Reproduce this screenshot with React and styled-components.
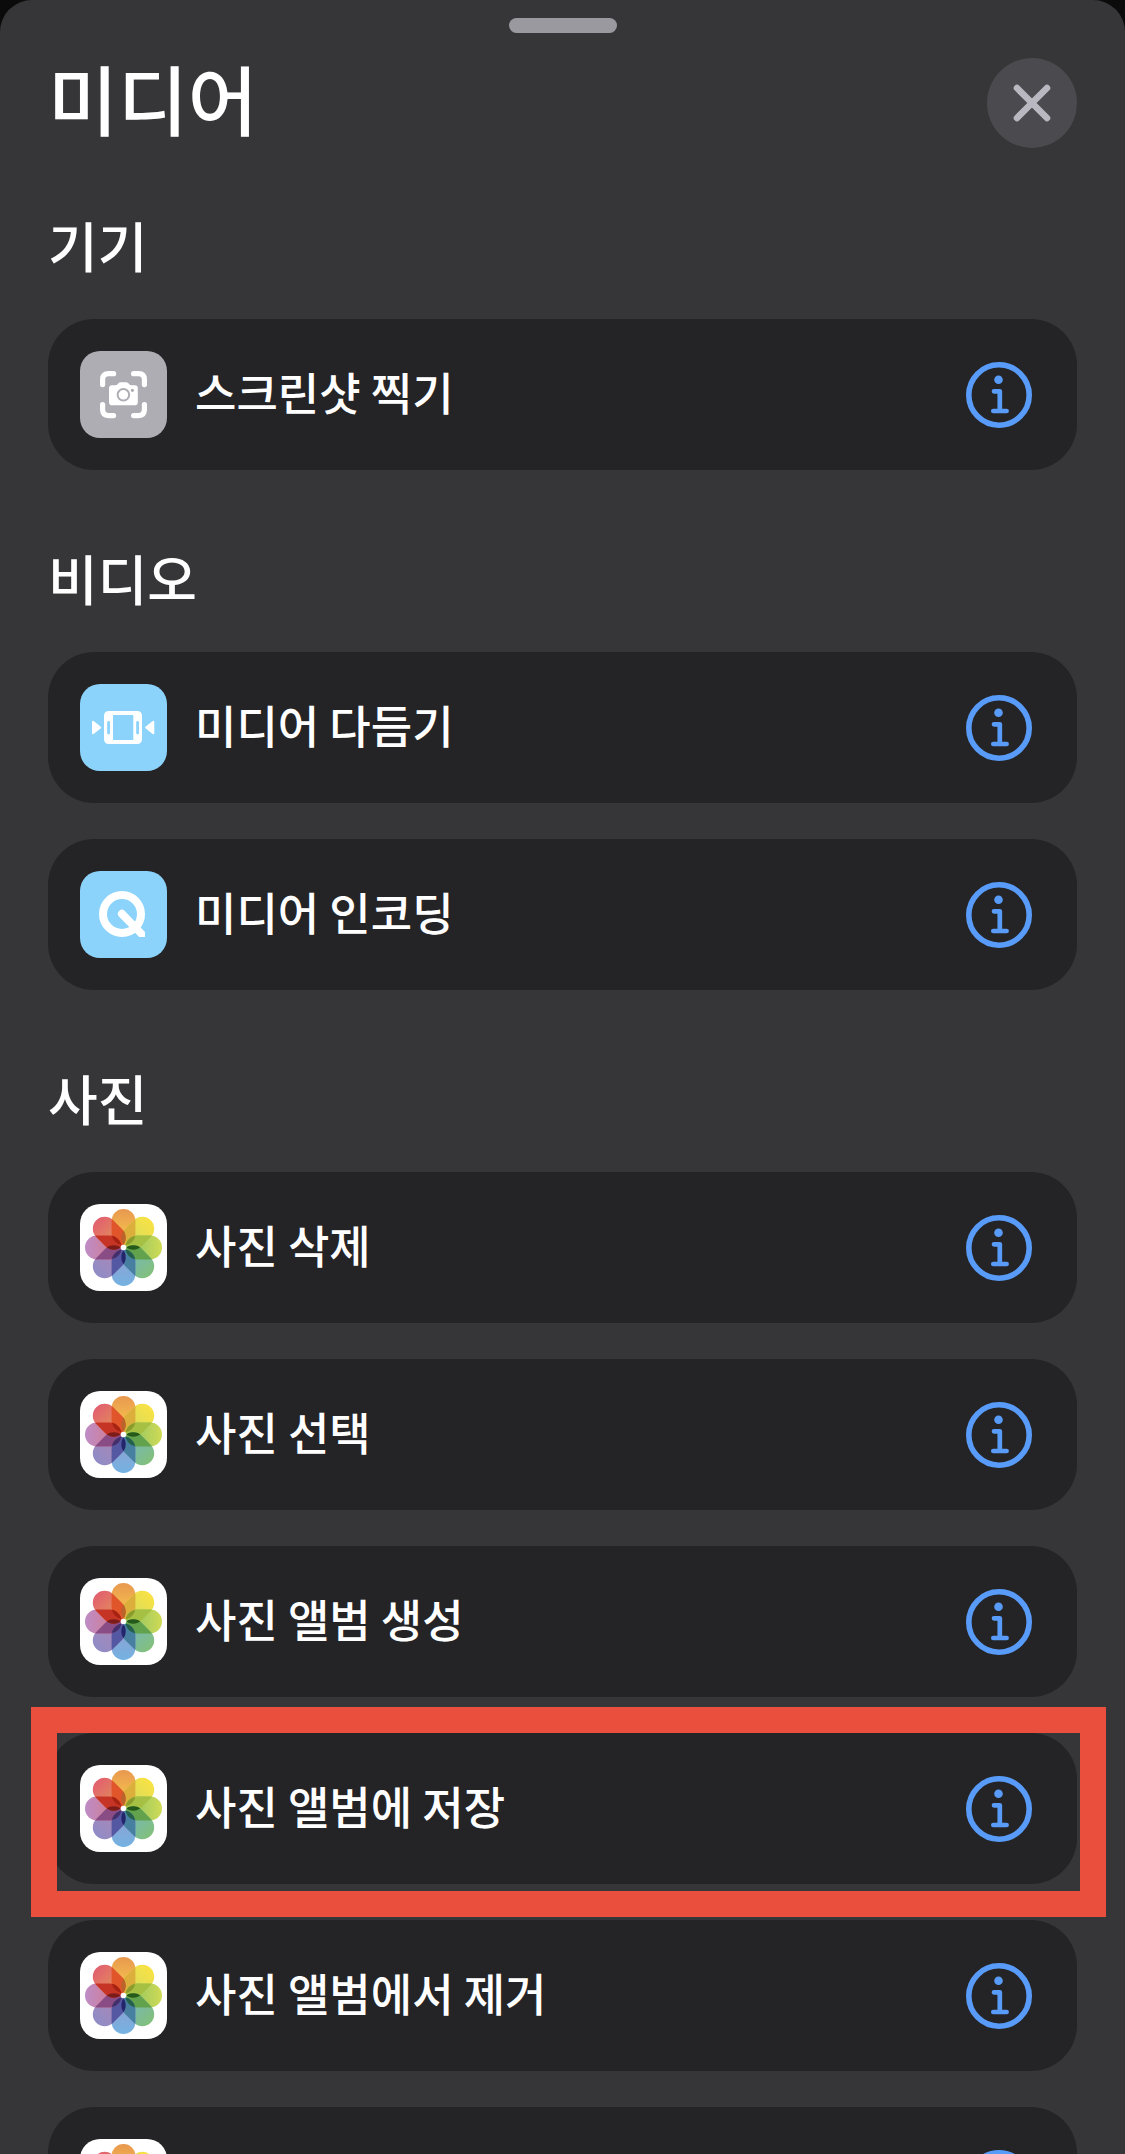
import React, { useId } from "react";
import styled, { createGlobalStyle } from "styled-components";

const GlobalStyle = createGlobalStyle`
  * {
    box-sizing: border-box;
  }
  body {
    margin: 0;
    background: #0b0b0c;
    color: white;
    font-family: "Noto Sans CJK KR", sans-serif;
  }
  button {
    padding: 0;
    border: none;
    background: none;
    color: inherit;
    font: inherit;
    cursor: pointer;
  }
`;

const Sheet = styled.main`
  display: flex;
  flex-direction: column;
  height: 100vh;
  overflow: hidden;
  padding: 18px 48px 0;
  border-radius: 32px 32px 0 0;
  background: #363638;
`;

const Grabber = styled.div`
  flex: none;
  align-self: center;
  width: 108px;
  height: 15px;
  border-radius: 8px;
  background: #9a99a0;
`;

const Header = styled.header`
  display: flex;
  align-items: flex-start;
  justify-content: space-between;
  margin: 25px 0 59px;
`;

const Title = styled.h1`
  margin: 0;
  font-size: 76px;
  line-height: 78px;
  font-weight: 500;
`;

const CloseButton = styled.button`
  display: flex;
  align-items: center;
  justify-content: center;
  width: 90px;
  height: 90px;
  border-radius: 50%;
  background: #4b4a4e;
`;

const Section = styled.section`
  & + & {
    margin-top: 70px;
  }
`;

const SectionTitle = styled.h2`
  margin: 0 0 36px;
  font-size: 54px;
  line-height: 76px;
  font-weight: 500;
`;

const List = styled.ul`
  display: flex;
  flex-direction: column;
  gap: 36px;
  margin: 0;
  padding: 0;
  list-style: none;
`;

const Row = styled.li`
  position: relative;
  display: flex;
  align-items: center;
  height: 151px;
  padding: 0 45px 0 32px;
  border-radius: 46px;
  background: #242426;
`;

const Action = styled.button`
  flex: 1;
  display: flex;
  align-items: center;
  gap: 28px;
  text-align: left;
`;

const Tile = styled.span`
  flex: none;
  width: 87px;
  height: 87px;
  border-radius: 20px;
  overflow: hidden;
  background: ${(props) => props.$color};

  svg {
    display: block;
  }
`;

const Label = styled.span`
  padding-bottom: 6px;
  font-size: 45px;
  line-height: 64px;
  font-weight: 500;
`;

const InfoButton = styled.button`
  flex: none;
  width: 66px;
  height: 66px;

  svg {
    display: block;
  }
`;

/* frame drawn over the highlighted row */
const Marker = styled.span`
  position: absolute;
  top: -26px;
  right: -29px;
  bottom: -33px;
  left: -17px;
  z-index: 1;
  border: 26px solid #ea4e3d;
  pointer-events: none;
`;

const CloseIcon = () => (
  <svg width="38" height="38" viewBox="0 0 38 38" fill="none" stroke="#b9b8c0" strokeWidth="6.6" strokeLinecap="round">
    <path d="M4 4L34 34M34 4L4 34" />
  </svg>
);

const InfoIcon = () => (
  <svg width="66" height="66" viewBox="0 0 66 66" fill="none" stroke="#589bf8">
    <circle cx="33" cy="33" r="30.2" strokeWidth="5.6" />
    <circle cx="32.5" cy="17.8" r="4.3" fill="#589bf8" stroke="none" />
    <path d="M28 29.3H33.8V49M27.3 49H40.6" strokeWidth="4.7" strokeLinecap="round" strokeLinejoin="round" />
  </svg>
);

const ScreenshotIcon = () => (
  <svg width="87" height="87" viewBox="0 0 87 87">
    <path
      d="M22.6 33.6V28.6Q22.6 22.7 28.6 22.7H33.6M53.6 22.7H58.6Q64.4 22.7 64.4 28.6V33.6M64.4 53.6V58.6Q64.4 64.6 58.6 64.6H53.6M33.6 64.6H28.6Q22.6 64.6 22.6 58.6V53.6"
      fill="none"
      stroke="white"
      strokeWidth="5.2"
      strokeLinecap="round"
    />
    <path
      d="M32 34.3H35.2Q36.8 34.3 37.8 33L38.4 32.3Q39.3 31.3 40.8 31.3H46Q47.5 31.3 48.4 32.3L49 33Q50 34.3 51.6 34.3H54.7Q57.8 34.3 57.8 37.4V51.2Q57.8 54.3 54.7 54.3H32Q29 54.3 29 51.2V37.4Q29 34.3 32 34.3Z"
      fill="white"
    />
    <circle cx="43.4" cy="43.8" r="5.8" fill="white" stroke="#aeadb3" strokeWidth="2" />
    <circle cx="52.4" cy="39.3" r="1.6" fill="#aeadb3" />
  </svg>
);

const TrimIcon = () => (
  <svg width="87" height="87" viewBox="0 0 87 87" fill="white">
    <path
      fillRule="evenodd"
      d="M29 27H57Q62 27 62 32V55Q62 60 57 60H29Q24 60 24 55V32Q24 27 29 27ZM33 31V56H53.3V31ZM28.6 37Q27.2 37 27.2 38.4V49Q27.2 50.4 28.6 50.4Q30 50.4 30 49V38.4Q30 37 28.6 37ZM57.6 37Q56.2 37 56.2 38.4V49Q56.2 50.4 57.6 50.4Q59 50.4 59 49V38.4Q59 37 57.6 37Z"
    />
    <path
      d="M13 37.8V49.2L20.2 43.5ZM73.3 37.8V49.2L66.1 43.5Z"
      stroke="white"
      strokeWidth="2"
      strokeLinejoin="round"
    />
  </svg>
);

const EncodeIcon = () => (
  <svg width="87" height="87" viewBox="0 0 87 87">
    <circle cx="42" cy="43" r="19" fill="none" stroke="white" strokeWidth="8" />
    <path d="M39.1 45.7A4 4 0 0 1 44.8 40L65 61V66H59.2Z" fill="white" />
  </svg>
);

/* clockwise from the top; overlap is shared with the next petal, core lies on the petal's own axis */
const petals = [
  { outer: "#e8984f", inner: "#f5be4e", overlap: "#dcae3c", core: "#b8642a" },
  { outer: "#f9e244", inner: "#dbdc5a", overlap: "#a6c044", core: "#8c9c2c" },
  { outer: "#d0db56", inner: "#9cc860", overlap: "#62a24c", core: "#265a1a" },
  { outer: "#82c07c", inner: "#78b8b0", overlap: "#467fa0", core: "#24604a" },
  { outer: "#74b2e2", inner: "#8aa4d4", overlap: "#5458a2", core: "#24266c" },
  { outer: "#8f8cc6", inner: "#a888b8", overlap: "#8a4c84", core: "#42306c" },
  { outer: "#bd8cc6", inner: "#d07f98", overlap: "#c63426", core: "#7c1c18" },
  { outer: "#e2606e", inner: "#e28a5c", overlap: "#e0562a", core: "#a82214" },
];

const Petal = ({ index, ...rest }) => (
  <rect
    x="31.6"
    y="5"
    width="23.8"
    height="36.6"
    rx="11.9"
    transform={`rotate(${index * 45} 43.5 43.5)`}
    {...rest}
  />
);

const PhotosIcon = () => {
  const id = useId();
  return (
    <svg width="87" height="87" viewBox="0 0 87 87">
      <defs>
        {petals.map(({ outer, inner }, i) => (
          <React.Fragment key={i}>
            <linearGradient id={`${id}fill${i}`} x1="0" y1="0" x2="0" y2="1">
              <stop offset="0" stopColor={outer} />
              <stop offset="0.7" stopColor={inner} />
            </linearGradient>
            <clipPath id={`${id}clip${i}`}>
              <Petal index={i} />
            </clipPath>
          </React.Fragment>
        ))}
      </defs>
      {petals.map((petal, i) => (
        <Petal key={i} index={i} fill={`url(#${id}fill${i})`} />
      ))}
      {petals.map(({ overlap }, i) => (
        <g key={i} clipPath={`url(#${id}clip${i})`}>
          <Petal index={(i + 1) % 8} fill={overlap} />
        </g>
      ))}
      {petals.map(({ core }, i) => (
        <g key={i} clipPath={`url(#${id}clip${(i + 7) % 8})`}>
          <Petal index={(i + 1) % 8} fill={core} />
        </g>
      ))}
      <circle cx="43.5" cy="43.5" r="2.8" fill="white" />
    </svg>
  );
};

const icons = {
  screenshot: { color: "#aeadb3", Icon: ScreenshotIcon },
  trim: { color: "#8bd3fa", Icon: TrimIcon },
  encode: { color: "#8bd3fa", Icon: EncodeIcon },
  photos: { color: "white", Icon: PhotosIcon },
};

const sections = [
  {
    title: "기기",
    items: [{ icon: "screenshot", label: "스크린샷 찍기" }],
  },
  {
    title: "비디오",
    items: [
      { icon: "trim", label: "미디어 다듬기" },
      { icon: "encode", label: "미디어 인코딩" },
    ],
  },
  {
    title: "사진",
    items: [
      { icon: "photos", label: "사진 삭제" },
      { icon: "photos", label: "사진 선택" },
      { icon: "photos", label: "사진 앨범 생성" },
      { icon: "photos", label: "사진 앨범에 저장", marked: true },
      { icon: "photos", label: "사진 앨범에서 제거" },
      { icon: "photos" },
    ],
  },
];

const ActionRow = ({ icon, label, marked }) => {
  const labelId = useId();
  const { color, Icon } = icons[icon];
  return (
    <Row>
      <Action type="button">
        <Tile $color={color}>
          <Icon />
        </Tile>
        {label && <Label id={labelId}>{label}</Label>}
      </Action>
      <InfoButton type="button" aria-labelledby={label && labelId}>
        <InfoIcon />
      </InfoButton>
      {marked && <Marker />}
    </Row>
  );
};

const App = () => {
  return (
    <>
      <GlobalStyle />
      <Sheet>
        <Grabber />
        <Header>
          <Title>미디어</Title>
          <CloseButton type="button" aria-label="닫기">
            <CloseIcon />
          </CloseButton>
        </Header>
        {sections.map((section) => (
          <Section key={section.title}>
            <SectionTitle>{section.title}</SectionTitle>
            <List>
              {section.items.map((item, i) => (
                <ActionRow key={i} {...item} />
              ))}
            </List>
          </Section>
        ))}
      </Sheet>
    </>
  );
};

export default App;
